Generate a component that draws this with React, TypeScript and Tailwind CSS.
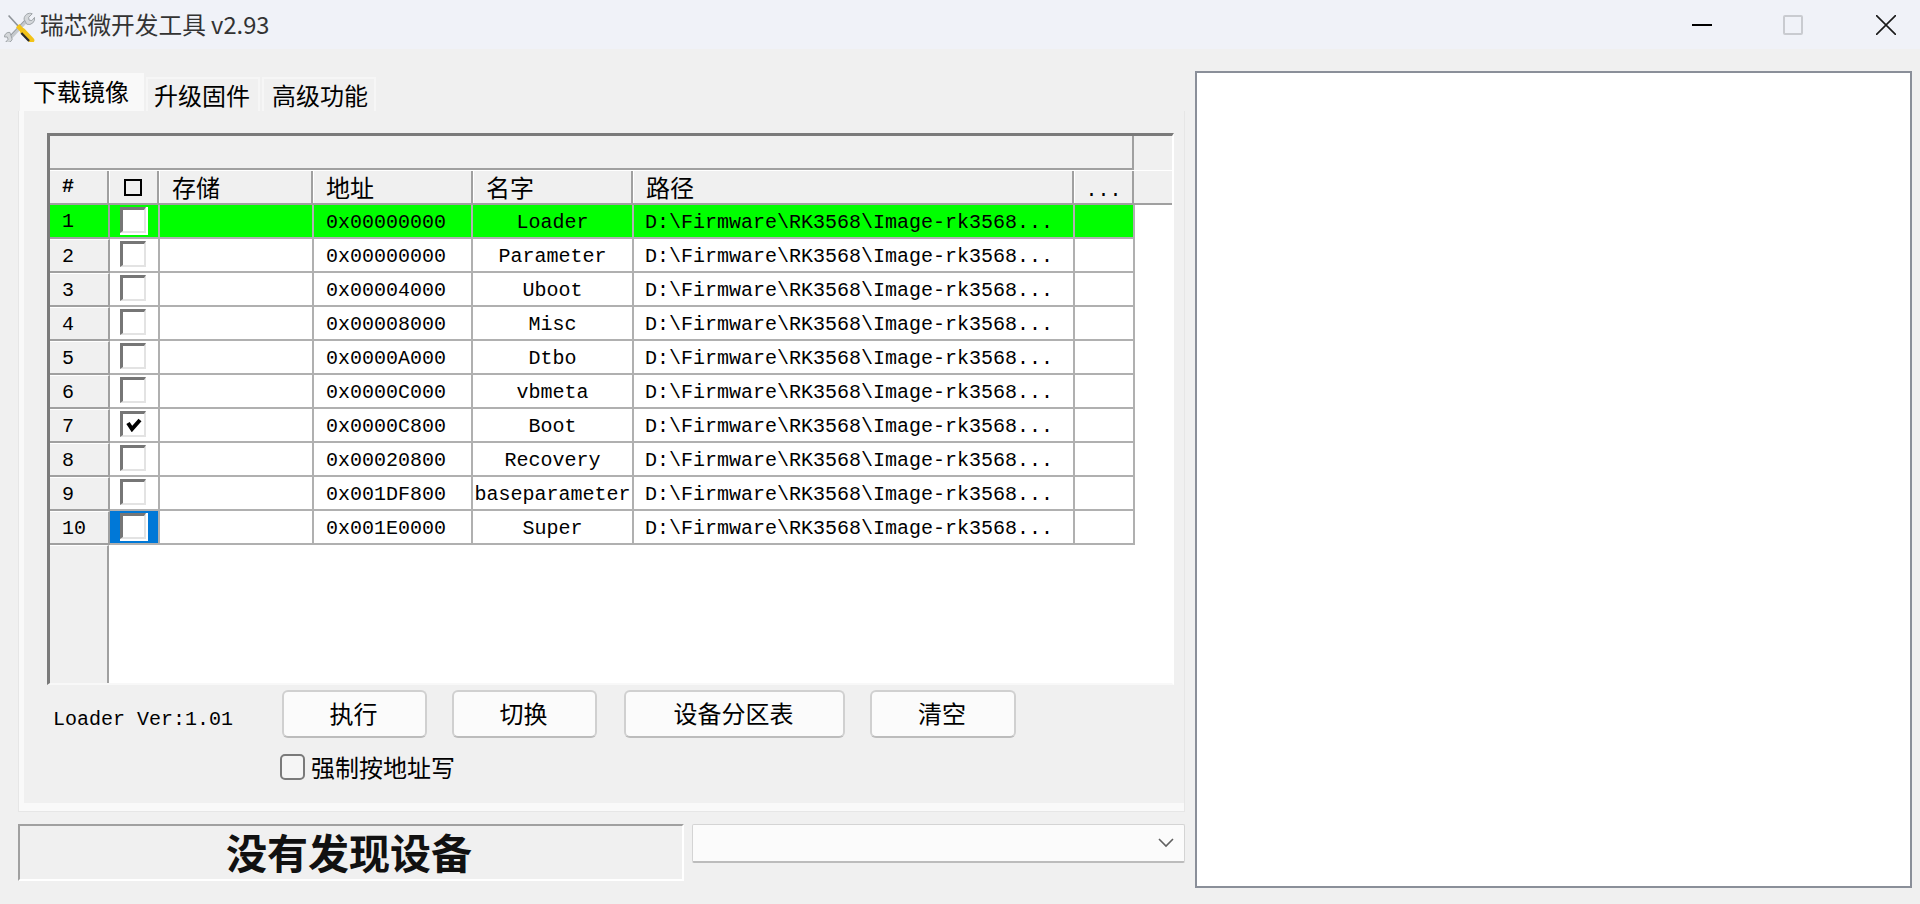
const CJK = "font-['Noto_Sans_CJK_SC',sans-serif]";
const MONO = "font-['Liberation_Mono',monospace]";

const rows: [string, string, boolean][] = [
  ["0x00000000", "Loader", false],
  ["0x00000000", "Parameter", false],
  ["0x00004000", "Uboot", false],
  ["0x00008000", "Misc", false],
  ["0x0000A000", "Dtbo", false],
  ["0x0000C000", "vbmeta", false],
  ["0x0000C800", "Boot", true],
  ["0x00020800", "Recovery", false],
  ["0x001DF800", "baseparameter", false],
  ["0x001E0000", "Super", false],
];

function AppIcon() {
  return (
    <svg width="31" height="31" viewBox="0 0 34 34" className="shrink-0 mt-[4px] ml-[2px]">
      <path d="M7 29 L25 10" stroke="#c4c8cc" strokeWidth="4.5" />
      <path d="M6.5 27.5 L24 9" stroke="#8f9499" strokeWidth="1" />
      <path d="M22 9 a6.5 6.5 0 0 1 9 -6 l-4 4 l0.5 3 l3 0.5 l3 -3.5 a6.5 6.5 0 0 1 -8.5 7.5 z" fill="#d4d7da" stroke="#9a9fa4" strokeWidth="1" />
      <path d="M9 31 a5 5 0 0 1 -7 3 l2.5 -3 l-1 -2.5 l-3 0 a5 5 0 0 1 6 -5 z" fill="#d4d7da" stroke="#9a9fa4" strokeWidth="1" />
      <path d="M5 5 L16 17" stroke="#8f9499" strokeWidth="1.8" />
      <path d="M15 16 L22 23.5" stroke="#f2c318" strokeWidth="5" />
      <path d="M21 22.5 L30 32" stroke="#f2c318" strokeWidth="6.5" strokeLinecap="round" />
      <path d="M19 24 L27.5 33" stroke="#2a2a2a" strokeWidth="2.4" />
    </svg>
  );
}

function CheckBox({ checked }: { checked: boolean }) {
  return (
    <div className="border-r-2 border-b-2 border-white">
      <div className="w-[26px] h-[26px] bg-white border-t-[3px] border-l-[3px] border-r-2 border-b-2 border-t-[#767676] border-l-[#767676] border-r-[#e3e3e3] border-b-[#e3e3e3] flex items-center justify-center">
        {checked && (
          <svg width="16" height="14" viewBox="0 0 16 14">
            <path d="M2 5 L6 11 L14 2" fill="none" stroke="#000" strokeWidth="4" />
          </svg>
        )}
      </div>
    </div>
  );
}

function HeadCell({ w, children, center }: { w: string; children?: React.ReactNode; center?: boolean }) {
  return (
    <div className={`${w} h-full shrink-0 border-r-2 border-[#a0a0a0] border-l border-l-white flex items-center ${center ? "justify-center" : "pl-3"} text-[24px] leading-none ${CJK}`}>
      {children}
    </div>
  );
}

function Row({ i, addr, name, checked }: { i: number; addr: string; name: string; checked: boolean }) {
  const first = i === 0;
  const last = i === 9;
  const bg = first ? "bg-[#00ff00]" : "bg-white";
  const line = "border-r-2 border-b-2 border-[#b0b0b0]";
  const txt = `h-full shrink-0 flex items-center ${line} ${bg}`;
  return (
    <div className={`flex h-[34px] shrink-0 text-[20px] leading-none text-black ${MONO}`}>
      <div className={`w-[60px] h-full shrink-0 flex items-center pl-[12px] pt-[2px] border-r-2 border-b-2 border-[#a0a0a0] ${first ? "bg-[#00ff00]" : "bg-[#f0f0f0] border-t border-t-white"}`}>
        {i + 1}
      </div>
      <div className={`w-[50px] ${txt} justify-start pl-[10px] ${last ? "bg-[#0078d7]!" : ""}`}>
        <CheckBox checked={checked} />
      </div>
      <div className={`w-[154px] ${txt}`} />
      <div className={`w-[159px] ${txt} pl-3 pt-[3px]`}>{addr}</div>
      <div className={`w-[161px] ${txt} justify-center pt-[3px]`}>{name}</div>
      <div className={`w-[441px] ${txt} pl-[11px] pt-[3px] whitespace-nowrap`}>{"D:\\Firmware\\RK3568\\Image-rk3568..."}</div>
      <div className={`w-[60px] ${txt}`} />
    </div>
  );
}

function Btn({ w, label }: { w: string; label: string }) {
  return (
    <div className={`${w} h-[48px] shrink-0 rounded-[6px] bg-[#fbfbfb] border-2 border-[#d0d0d0] border-b-[#bcbcbc] flex items-center justify-center pr-[2px] pb-[2px] text-[24px] leading-none text-black ${CJK}`}>
      {label}
    </div>
  );
}

export default function App() {
  return (
    <div className="w-[1920px] h-[904px] overflow-hidden bg-[#f0f0f0] flex flex-col">
      <div className="h-[49px] shrink-0 bg-[#f0f2f8] flex items-center pl-[2px]">
        <AppIcon />
        <div className={`ml-[5px] text-[23.7px] leading-none text-[#333] ${CJK}`}>瑞芯微开发工具 v2.93</div>
        <div className="ml-auto flex items-center pr-[24px]">
          <div className="w-[20px] h-[2px] bg-black" />
          <div className="ml-[71px] w-[20px] h-[20px] rounded-[2px] border-2 border-[#c9cbd0]" />
          <svg className="ml-[73px]" width="20" height="20" viewBox="0 0 20 20">
            <path d="M0 0 L20 20 M20 0 L0 20" stroke="#1a1a1a" strokeWidth="1.6" />
          </svg>
        </div>
      </div>

      <div className="flex flex-1 min-h-0 pl-[18px]">
        <div className="w-[1167px] shrink-0 flex flex-col pt-[24px]">
          <div className={`flex items-end h-[38px] pl-[2px] text-[24px] leading-none text-black ${CJK}`}>
            <div className="w-[124px] h-[38px] bg-[#f9f9f9] flex items-center justify-center pb-[2px] pr-[2px]">下载镜像</div>
            <div className="ml-[2px] w-[114px] h-[34px] bg-[#f0f0f0] border-2 border-b-0 border-[#f6f6f6] flex items-center justify-center pr-[2px]">升级固件</div>
            <div className="ml-[2px] w-[114px] h-[34px] bg-[#f0f0f0] border-2 border-b-0 border-[#f6f6f6] flex items-center justify-center pl-[2px]">高级功能</div>
          </div>

          <div className="h-[701px] shrink-0 border border-t-0 border-[#e6e6e6] bg-[#f9f9f9] pl-[5px] pb-[8px]">
            <div className="h-full bg-[#f0f0f0] pt-[22px] pl-[23px] flex flex-col">
              <div className="w-[1127px] h-[552px] shrink-0 flex flex-col border-t-[3px] border-l-[3px] border-t-[#7a7a7a] border-l-[#7a7a7a] border-r-2 border-b-2 border-r-white border-b-[#f8f8f8] bg-white">
                <div className="h-[34px] shrink-0 flex bg-[#f0f0f0]">
                  <div className="w-[1084px] h-full border-r-2 border-b-2 border-[#a0a0a0]" />
                </div>
                <div className="h-[35px] shrink-0 flex border-b-2 border-[#a0a0a0] border-t border-t-white bg-[#f0f0f0] text-black">
                  <div className={`w-[59px] h-full shrink-0 border-r-2 border-[#a0a0a0] flex items-center pl-[12px] ${MONO} text-[20px] font-bold leading-none`}>#</div>
                  <HeadCell w="w-[50px]" center><div className="w-[18px] h-[17px] border-2 border-black mr-[2px]" /></HeadCell>
                  <HeadCell w="w-[154px]">存储</HeadCell>
                  <HeadCell w="w-[160px]">地址</HeadCell>
                  <HeadCell w="w-[160px]">名字</HeadCell>
                  <HeadCell w="w-[441px]">路径</HeadCell>
                  <HeadCell w="w-[60px]" center><span className={`${MONO} text-[20px] pt-[8px]`}>...</span></HeadCell>
                </div>
                {rows.map(([addr, name, checked], i) => (
                  <Row key={i} i={i} addr={addr} name={name} checked={checked} />
                ))}
                <div className="flex-1 min-h-0 flex">
                  <div className="w-[59px] bg-[#f0f0f0] border-r-2 border-[#a0a0a0] border-t border-t-white" />
                </div>
              </div>

              <div className="relative mt-[5px] h-[48px] shrink-0 flex pl-[235px]">
                <div className={`absolute left-[6px] top-[18px] text-[20px] leading-[24px] text-black whitespace-nowrap ${MONO}`}>Loader Ver:1.01</div>
                <Btn w="w-[145px]" label="执行" />
                <div className="w-[25px] shrink-0" />
                <Btn w="w-[145px]" label="切换" />
                <div className="w-[27px] shrink-0" />
                <Btn w="w-[221px]" label="设备分区表" />
                <div className="w-[25px] shrink-0" />
                <Btn w="w-[146px]" label="清空" />
              </div>

              <div className="mt-[16px] flex items-center pl-[233px]">
                <div className="w-[25px] h-[26px] rounded-[5px] border-2 border-[#7a7a7a] bg-[#f5f5f5]" />
                <div className={`ml-[6px] text-[24px] leading-[26px] text-black ${CJK}`}>强制按地址写</div>
              </div>
            </div>
          </div>

          <div className="mt-[12px] flex">
            <div className="w-[666px] h-[57px] shrink-0 border-t-2 border-l-2 border-r-2 border-b-2 border-t-[#a0a0a0] border-l-[#a0a0a0] border-r-white border-b-white flex items-center justify-center pr-[4px] pb-[3px]">
              <span className={`text-[41px] leading-none font-bold text-[#111] ${CJK}`}>没有发现设备</span>
            </div>
            <div className="ml-[8px] w-[493px] h-[39px] shrink-0 rounded-[2px] bg-[#fbfbfb] border border-[#d4d4d4] border-b-2 border-b-[#bcbcbc] flex items-center justify-end pr-[10px]">
              <svg width="16" height="10" viewBox="0 0 16 10">
                <path d="M1 1 L8 8 L15 1" fill="none" stroke="#606060" strokeWidth="1.6" />
              </svg>
            </div>
          </div>
        </div>

        <div className="ml-[10px] mt-[22px] w-[717px] h-[817px] shrink-0 bg-white border-2 border-[#8a8f99]" />
      </div>
    </div>
  );
}
